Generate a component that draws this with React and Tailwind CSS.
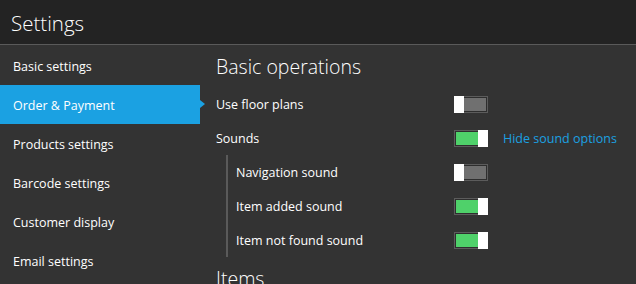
import React from "react";

const menu = [
  "Basic settings",
  "Order & Payment",
  "Products settings",
  "Barcode settings",
  "Customer display",
  "Email settings",
];

const Toggle = ({ on }) => (
  <div className="w-[34px] h-[17px] border border-[#5c5c5c] p-px flex bg-[#2e2e2e]">
    {on ? (
      <>
        <div className="flex-1 bg-[#4fd16a]" />
        <div className="w-[10px] -my-[2px] -mr-[2px] bg-white" />
      </>
    ) : (
      <>
        <div className="w-[10px] -my-[2px] -ml-[2px] bg-white" />
        <div className="flex-1 bg-[#707070]" />
      </>
    )}
  </div>
);

const Row = ({ label, on, width, children }) => (
  <div className="h-[34px] flex items-center">
    <div className={"pt-[3px] text-[12.5px] text-white " + width}>{label}</div>
    <Toggle on={on} />
    {children}
  </div>
);

export default function App() {
  return (
    <div
      className="w-[636px] h-[284px] overflow-hidden bg-[#333333] flex flex-col"
      style={{ fontFamily: '"Open Sans", "Noto Sans", sans-serif' }}
    >
      <div className="h-[45px] shrink-0 bg-[#232323] border-b border-[#5a5a5a] flex items-center pl-[11px] pt-[2px]">
        <span className="text-[20.5px] font-light text-white">Settings</span>
      </div>

      <div className="flex flex-1">
        <div className="w-[200px] pt-px shrink-0">
          {menu.map((item, i) => (
            <div
              key={item}
              className={
                "relative h-[39px] flex items-center pl-[13px] pt-[3px] text-[12.5px] text-white " +
                (i === 1 ? "bg-[#1ba1e2]" : "")
              }
            >
              {item}
              {i === 1 && (
                <div className="absolute right-[-5px] top-[15px] w-0 h-0 border-y-[4px] border-y-transparent border-l-[5px] border-l-[#1ba1e2]" />
              )}
            </div>
          ))}
        </div>

        <div className="pl-[16px] flex-1">
          <div className="h-[42px] flex items-center pt-[2px] text-[19.5px] font-light text-white">
            Basic operations
          </div>
          <Row label="Use floor plans" on={false} width="w-[238px]" />
          <Row label="Sounds" on={true} width="w-[238px]">
            <span className="ml-[15px] pt-[3px] text-[12.5px] text-[#1ba1e2]">Hide sound options</span>
          </Row>
          <div className="ml-[10px] border-l-2 border-[#5a5a5a] pl-[8px]">
            <Row label="Navigation sound" on={false} width="w-[218px]" />
            <Row label="Item added sound" on={true} width="w-[218px]" />
            <Row label="Item not found sound" on={true} width="w-[218px]" />
          </div>
          <div className="mt-[12px] text-[19.5px] font-light text-white leading-none">Items</div>
        </div>
      </div>
    </div>
  );
}
